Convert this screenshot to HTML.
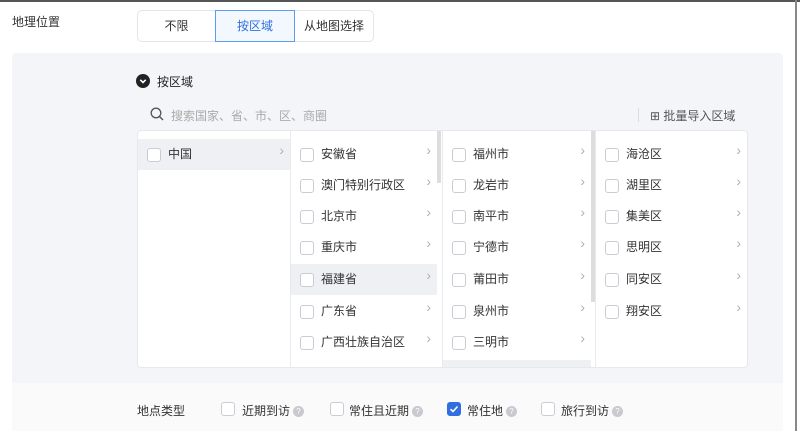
<!DOCTYPE html>
<html><head><meta charset="utf-8"><style>
*{box-sizing:border-box;margin:0;padding:0}
body{width:800px;height:431px;overflow:hidden;background:#fff;position:relative;font-family:"Liberation Sans","Noto Sans CJK SC",sans-serif;font-size:12px;color:#333}
.a{position:absolute}
.seg{position:absolute;top:10px;height:32px;line-height:30px;text-align:center;font-size:12px;color:#333;border:1px solid #e3e5ea;background:#fff}
.cb{position:absolute;width:14px;height:14px;border:1px solid #c9ccd2;border-radius:3px;background:#fff}
.row{position:absolute;height:31px;line-height:31px;font-size:12px;color:#333}
.row .cb{left:9px;top:9px}
.row span{position:absolute;left:30px}
.row i{position:absolute;right:6px;top:-4px;font-style:normal;color:#b0b0b0;font-size:14px}
.q{display:inline-block;width:11px;height:11px;border-radius:50%;background:#c8cacf;color:#fff;font-size:8px;line-height:11px;text-align:center;vertical-align:middle;margin-left:3px}
</style></head><body>
<div class="a" style="left:0;top:0;width:800px;height:2px;background:#555"></div>
<div class="a" style="left:795px;top:0;width:2px;height:431px;background:#888"></div>
<div class="a" style="left:12px;top:13px;font-size:12px;color:#333">地理位置</div>
<div class="seg" style="left:137px;width:79px;border-radius:5px 0 0 5px">不限</div>
<div class="seg" style="left:294px;width:80px;border-radius:0 5px 5px 0">从地图选择</div>
<div class="seg" style="left:215px;width:80px;border-color:#5b9bf0;background:#f3f8ff;color:#2f6fdf">按区域</div>

<div class="a" style="left:12px;top:53px;width:771px;height:330px;background:#f4f5f8;border-radius:4px 4px 0 0"></div>
<div class="a" style="left:12px;top:383px;width:771px;height:48px;background:#fafafa"></div>

<div class="a" style="left:136px;top:74px;width:14px;height:14px;border-radius:50%;background:#222"></div>
<svg class="a" style="left:136px;top:74px" width="14" height="14" viewBox="0 0 14 14"><path d="M4.3 5.8L7 8.5L9.7 5.8" fill="none" stroke="#fff" stroke-width="1.6"/></svg>
<div class="a" style="left:157px;top:73px;font-size:12px;color:#222">按区域</div>

<svg class="a" style="left:150px;top:107px" width="14" height="14" viewBox="0 0 14 14"><circle cx="6" cy="6" r="4.8" fill="none" stroke="#555" stroke-width="1.3"/><path d="M9.5 9.5L13 13" stroke="#555" stroke-width="1.4"/></svg>
<div class="a" style="left:171px;top:107px;color:#aaa;font-size:12px">搜索国家、省、市、区、商圈</div>
<div class="a" style="left:638px;top:108px;width:1px;height:14px;background:#ddd"></div>
<div class="a" style="left:650px;top:107px;color:#555;font-size:12px">⊞ 批量导入区域</div>

<div class="a" style="left:137px;top:130px;width:611px;height:238px;background:#fff;border:1px solid #e6e8ec;border-radius:4px"></div>
<div class="a" style="left:290px;top:131px;width:1px;height:236px;background:#e8eaee"></div>
<div class="a" style="left:442px;top:131px;width:1px;height:236px;background:#e8eaee"></div>
<div class="a" style="left:595px;top:131px;width:1px;height:236px;background:#e8eaee"></div>
<div class="a" style="left:437px;top:131px;width:4px;height:52px;background:#ddd"></div>
<div class="a" style="left:591px;top:131px;width:4px;height:171px;background:#ddd"></div>
<div class="a" style="left:443px;top:360px;width:148px;height:7px;background:#eef0f4"></div>

<div class="row" style="left:138px;top:139px;width:152px;background:#eef0f4"><div class="cb"></div><span>中国</span><i>›</i></div>

<div class="row" style="left:291px;top:139px;width:146px"><div class="cb"></div><span>安徽省</span><i>›</i></div>
<div class="row" style="left:291px;top:170px;width:146px"><div class="cb"></div><span>澳门特别行政区</span><i>›</i></div>
<div class="row" style="left:291px;top:201px;width:146px"><div class="cb"></div><span>北京市</span><i>›</i></div>
<div class="row" style="left:291px;top:232px;width:146px"><div class="cb"></div><span>重庆市</span><i>›</i></div>
<div class="row" style="left:291px;top:264px;width:146px;background:#eef0f4"><div class="cb"></div><span>福建省</span><i>›</i></div>
<div class="row" style="left:291px;top:296px;width:146px"><div class="cb"></div><span>广东省</span><i>›</i></div>
<div class="row" style="left:291px;top:327px;width:146px"><div class="cb"></div><span>广西壮族自治区</span><i>›</i></div>

<div class="row" style="left:443px;top:139px;width:148px"><div class="cb"></div><span>福州市</span><i>›</i></div>
<div class="row" style="left:443px;top:170px;width:148px"><div class="cb"></div><span>龙岩市</span><i>›</i></div>
<div class="row" style="left:443px;top:201px;width:148px"><div class="cb"></div><span>南平市</span><i>›</i></div>
<div class="row" style="left:443px;top:232px;width:148px"><div class="cb"></div><span>宁德市</span><i>›</i></div>
<div class="row" style="left:443px;top:264px;width:148px"><div class="cb"></div><span>莆田市</span><i>›</i></div>
<div class="row" style="left:443px;top:296px;width:148px"><div class="cb"></div><span>泉州市</span><i>›</i></div>
<div class="row" style="left:443px;top:327px;width:148px"><div class="cb"></div><span>三明市</span><i>›</i></div>

<div class="row" style="left:596px;top:139px;width:151px"><div class="cb"></div><span>海沧区</span><i>›</i></div>
<div class="row" style="left:596px;top:170px;width:151px"><div class="cb"></div><span>湖里区</span><i>›</i></div>
<div class="row" style="left:596px;top:201px;width:151px"><div class="cb"></div><span>集美区</span><i>›</i></div>
<div class="row" style="left:596px;top:232px;width:151px"><div class="cb"></div><span>思明区</span><i>›</i></div>
<div class="row" style="left:596px;top:264px;width:151px"><div class="cb"></div><span>同安区</span><i>›</i></div>
<div class="row" style="left:596px;top:296px;width:151px"><div class="cb"></div><span>翔安区</span><i>›</i></div>

<div class="a" style="left:137px;top:402px;color:#333">地点类型</div>
<div class="cb" style="left:221px;top:402px"></div><div class="a" style="left:242px;top:402px">近期到访<span class="q">?</span></div>
<div class="cb" style="left:330px;top:402px"></div><div class="a" style="left:349px;top:402px">常住且近期<span class="q">?</span></div>
<div class="cb" style="left:447px;top:402px;background:#2f6fdf;border-color:#2f6fdf"></div>
<svg class="a" style="left:448px;top:403px" width="12" height="12" viewBox="0 0 12 12"><path d="M2.5 6.2L5 8.5L9.5 3.5" fill="none" stroke="#fff" stroke-width="1.6"/></svg>
<div class="a" style="left:467px;top:402px">常住地<span class="q">?</span></div>
<div class="cb" style="left:541px;top:402px"></div><div class="a" style="left:561px;top:402px">旅行到访<span class="q">?</span></div>
</body></html>
